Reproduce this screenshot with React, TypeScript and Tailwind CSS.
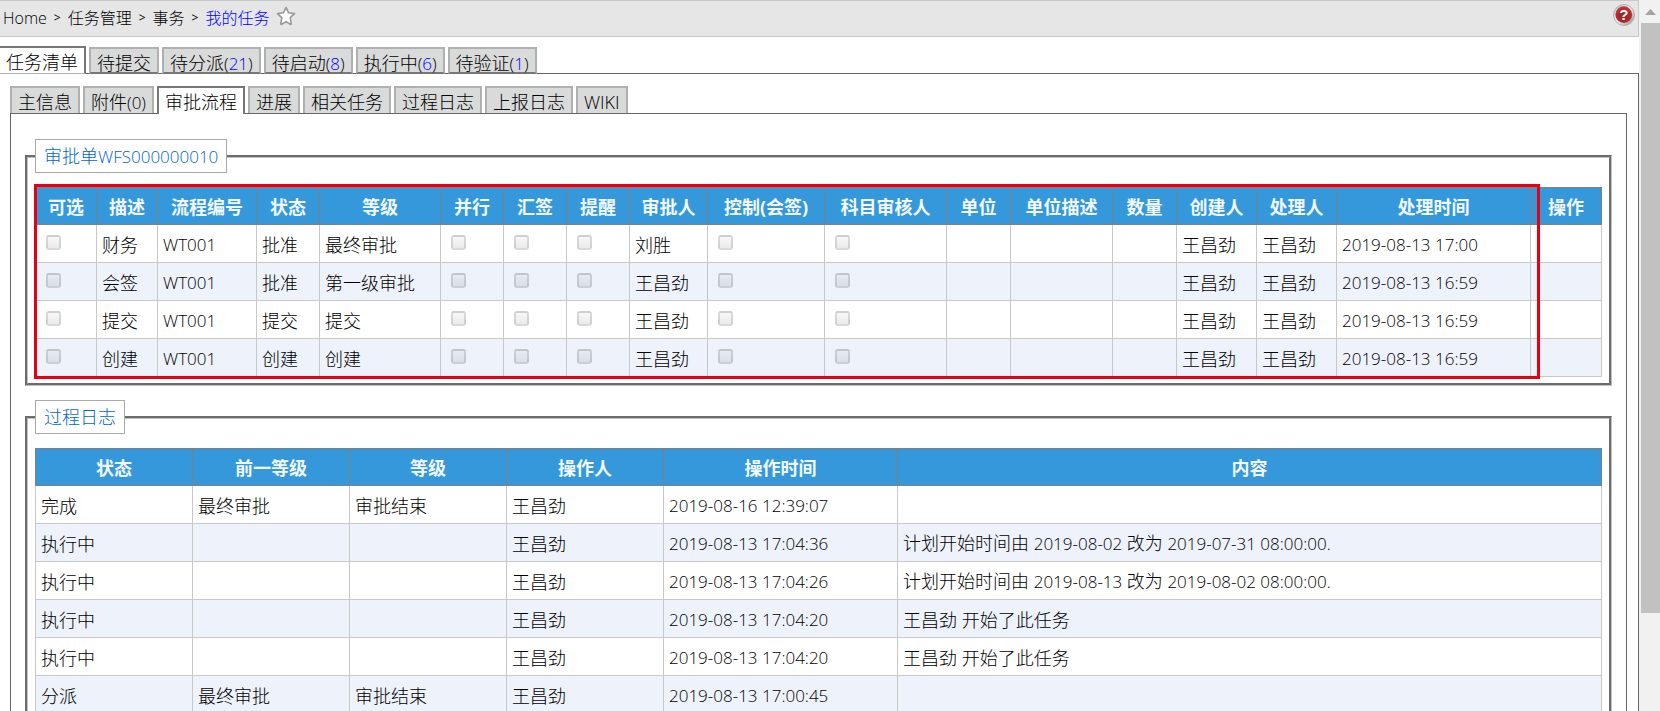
import React, { useState } from 'react';
import clsx from 'clsx';

interface TabItem {
  label: string;
  count?: number;
  highlight?: boolean;
}

interface Column {
  title: string;
  width: string;
}

const TASK_TABS: TabItem[] = [
  { label: '任务清单' },
  { label: '待提交' },
  { label: '待分派', count: 21, highlight: true },
  { label: '待启动', count: 8, highlight: true },
  { label: '执行中', count: 6, highlight: true },
  { label: '待验证', count: 1, highlight: true },
];

const DETAIL_TABS: TabItem[] = [
  { label: '主信息' },
  { label: '附件', count: 0 },
  { label: '审批流程' },
  { label: '进展' },
  { label: '相关任务' },
  { label: '过程日志' },
  { label: '上报日志' },
  { label: 'WIKI' },
];

const FLOW_COLUMNS: Column[] = [
  { title: '可选', width: 'w-[61px]' },
  { title: '描述', width: 'w-[61px]' },
  { title: '流程编号', width: 'w-[99px]' },
  { title: '状态', width: 'w-[63px]' },
  { title: '等级', width: 'w-[121px]' },
  { title: '并行', width: 'w-[63px]' },
  { title: '汇签', width: 'w-[63px]' },
  { title: '提醒', width: 'w-[63px]' },
  { title: '审批人', width: 'w-[78px]' },
  { title: '控制(会签)', width: 'w-[117px]' },
  { title: '科目审核人', width: 'w-[122px]' },
  { title: '单位', width: 'w-[64px]' },
  { title: '单位描述', width: 'w-[102px]' },
  { title: '数量', width: 'w-[64px]' },
  { title: '创建人', width: 'w-[80px]' },
  { title: '处理人', width: 'w-[80px]' },
  { title: '处理时间', width: 'w-[194px]' },
  { title: '操作', width: 'w-[71px]' },
];

const FLOW_ROWS = [
  { desc: '财务', code: 'WT001', status: '批准', level: '最终审批', approver: '刘胜', time: '2019-08-13 17:00' },
  { desc: '会签', code: 'WT001', status: '批准', level: '第一级审批', approver: '王昌劲', time: '2019-08-13 16:59' },
  { desc: '提交', code: 'WT001', status: '提交', level: '提交', approver: '王昌劲', time: '2019-08-13 16:59' },
  { desc: '创建', code: 'WT001', status: '创建', level: '创建', approver: '王昌劲', time: '2019-08-13 16:59' },
];

const LOG_COLUMNS: Column[] = [
  { title: '状态', width: 'w-[157px]' },
  { title: '前一等级', width: 'w-[157px]' },
  { title: '等级', width: 'w-[157px]' },
  { title: '操作人', width: 'w-[157px]' },
  { title: '操作时间', width: 'w-[234px]' },
  { title: '内容', width: 'w-[704px]' },
];

const LOG_ROWS = [
  ['完成', '最终审批', '审批结束', '王昌劲', '2019-08-16 12:39:07', ''],
  ['执行中', '', '', '王昌劲', '2019-08-13 17:04:36', '计划开始时间由 2019-08-02 改为 2019-07-31 08:00:00.'],
  ['执行中', '', '', '王昌劲', '2019-08-13 17:04:26', '计划开始时间由 2019-08-13 改为 2019-08-02 08:00:00.'],
  ['执行中', '', '', '王昌劲', '2019-08-13 17:04:20', '王昌劲 开始了此任务'],
  ['执行中', '', '', '王昌劲', '2019-08-13 17:04:20', '王昌劲 开始了此任务'],
  ['分派', '最终审批', '审批结束', '王昌劲', '2019-08-13 17:00:45', ''],
];

// latin runs sit one size below the chinese text
const Mixed = ({ text }: { text: string }) => (
  <>
    {text.split(/([\x21-\x7e][\x20-\x7e]*)/).map((part, i) =>
      i % 2 ? <span key={i} className="text-[17px]">{part}</span> : part
    )}
  </>
);

const StarIcon = () => (
  <svg width="20" height="20" viewBox="0 0 20 20">
    <path
      d="M10 1.4l2.6 5.4 5.9.8-4.3 4.1 1 5.9c.1.6-.3.9-.8.6L10 15.6l-4.4 2.6c-.5.3-.9 0-.8-.6l1-5.9L1.5 7.6l5.9-.8z"
      fill="#fff"
      stroke="#9a9a9a"
      strokeWidth="1.6"
      strokeLinejoin="round"
    />
  </svg>
);

const HelpIcon = () => (
  <svg width="22" height="22" viewBox="0 0 22 22">
    <defs>
      <linearGradient id="ring" x1="0" y1="0" x2="1" y2="1">
        <stop offset="0" stopColor="#b9bcbe" />
        <stop offset="0.5" stopColor="#f0f0f0" />
        <stop offset="1" stopColor="#858a8c" />
      </linearGradient>
      <radialGradient id="ball" cx="0.5" cy="0.6" r="0.6">
        <stop offset="0" stopColor="#9c2425" />
        <stop offset="0.6" stopColor="#a92a2a" />
        <stop offset="1" stopColor="#d23a3a" />
      </radialGradient>
    </defs>
    <circle cx="11" cy="11" r="10.5" fill="url(#ring)" stroke="#a4a8aa" strokeWidth="0.8" />
    <circle cx="10.8" cy="10.6" r="8.4" fill="url(#ball)" />
    <text x="10.8" y="16" textAnchor="middle" fontFamily="Liberation Sans, sans-serif" fontSize="15" fontWeight="700" fill="#fff">?</text>
  </svg>
);

interface TabBarProps {
  items: TabItem[];
  initial: number;
  nested?: boolean;
}

const TabBar = ({ items, initial, nested }: TabBarProps) => {
  const [active, setActive] = useState(initial);

  return (
    <div role="tablist" className={clsx('relative flex items-end gap-[3px]', !nested && '-mb-px')}>
      {items.map((tab, i) => (
        <button
          key={tab.label}
          role="tab"
          aria-selected={i === active}
          onClick={() => setActive(i)}
          className={clsx(
            'whitespace-nowrap border-x-2 border-t-2 px-1.5 pt-0.5 text-lg leading-6 font-light',
            i === active ? 'h-7 border-[#777] bg-white' : 'h-[27px] border-[#b0b0b0] bg-[#d9dada]',
            !nested && i === 0 && 'border-l-0',
            nested && i === active && '-mb-px',
            !nested && (i === active ? 'border-b border-b-[#b0b0b0]' : 'border-b-2 border-b-[#777]'),
          )}
        >
          {tab.label}
          {tab.count !== undefined && (
            <span className="text-[17px]">
              (<span className={clsx(tab.highlight && 'text-[#0000ff]')}>{tab.count}</span>)
            </span>
          )}
        </button>
      ))}
    </div>
  );
};

const TableHead = ({ columns }: { columns: Column[] }) => (
  <thead>
    <tr className="h-[37px] bg-[#3498db]">
      {columns.map((col) => (
        <th key={col.title} className={clsx('border border-[#808080] px-0 pt-0.5 pb-0 text-lg leading-6 font-bold text-[#f2f8fd]', col.width)}>
          {col.title}
        </th>
      ))}
    </tr>
  </thead>
);

const Cell = ({ children }: { children?: React.ReactNode }) => (
  <td className="whitespace-nowrap border border-[#c8c8c8] px-[5px] pt-0.5 pb-0">
    {typeof children === 'string' ? <Mixed text={children} /> : children}
  </td>
);

const CheckCell = ({ label }: { label: string }) => (
  <Cell>
    <input
      type="checkbox"
      disabled
      aria-label={label}
      className="mb-1 ml-[5px] block size-[15px] appearance-none rounded-[3px] border-2 border-black/12 bg-linear-to-b from-black/3 to-black/8"
    />
  </Cell>
);

const Legend = ({ text }: { text: string }) => (
  <legend className="h-[34px] border border-[#a9a9a9] bg-white px-2 pt-1 text-lg leading-6 font-light text-[#0066cc]">
    <Mixed text={text} />
  </legend>
);

const FIELDSET = 'mx-[14px] border-[3px] border-[#c0c0c0] px-[7px] pt-[14px] pb-[6px] [border-style:groove]';

const App = () => {
  return (
    <div className="flex h-screen overflow-hidden bg-white font-['Open_Sans','Noto_Sans_CJK_SC',sans-serif] text-black">
      <main className="min-w-0 flex-1">
        <header className="flex h-[37px] items-start justify-between border border-l-0 border-[#c8c8c8] bg-[#e6e6e6] px-[3px]">
          <nav className="flex items-center gap-[7px] pt-[5px] text-base leading-6 font-light">
            <a href="#home">Home</a>
            <span className="text-xs font-normal">&gt;</span>
            <a href="#task">任务管理</a>
            <span className="text-xs font-normal">&gt;</span>
            <a href="#affair">事务</a>
            <span className="text-xs font-normal">&gt;</span>
            <a href="#mine" className="text-[#0000ff]">我的任务</a>
            <button aria-label="收藏" className="-mt-1"><StarIcon /></button>
          </nav>
          <button aria-label="帮助" className="pt-[3px]"><HelpIcon /></button>
        </header>

        <div className="pt-[9px]">
          <TabBar items={TASK_TABS} initial={0} />
          <section className="border-t border-r border-[#666] pt-3 pr-[11px] pl-[10px]">
            <TabBar items={DETAIL_TABS} initial={2} nested />
            <section className="border border-[#666] pt-[25px] pb-6">
              <fieldset className={FIELDSET}>
                <Legend text="审批单WFS000000010" />
                <div className="relative">
                  <table className="w-full table-fixed border-collapse text-lg leading-6 font-light">
                    <TableHead columns={FLOW_COLUMNS} />
                    <tbody>
                      {FLOW_ROWS.map((row) => (
                        <tr key={row.desc} className="h-[38px] even:bg-[#eef2fb]">
                          <CheckCell label="可选" />
                          <Cell>{row.desc}</Cell>
                          <Cell>{row.code}</Cell>
                          <Cell>{row.status}</Cell>
                          <Cell>{row.level}</Cell>
                          <CheckCell label="并行" />
                          <CheckCell label="汇签" />
                          <CheckCell label="提醒" />
                          <Cell>{row.approver}</Cell>
                          <CheckCell label="控制(会签)" />
                          <CheckCell label="科目审核人" />
                          <Cell />
                          <Cell />
                          <Cell />
                          <Cell>王昌劲</Cell>
                          <Cell>王昌劲</Cell>
                          <Cell>{row.time}</Cell>
                          <Cell />
                        </tr>
                      ))}
                    </tbody>
                  </table>
                  <div className="pointer-events-none absolute -top-[3px] right-[62px] -bottom-0.5 -left-px border-[3px] border-[#e60012]" />
                </div>
              </fieldset>

              <fieldset className={clsx(FIELDSET, 'mt-[14px]')}>
                <Legend text="过程日志" />
                <table className="w-full table-fixed border-collapse text-lg leading-6 font-light">
                  <TableHead columns={LOG_COLUMNS} />
                  <tbody>
                    {LOG_ROWS.map((row, i) => (
                      <tr key={i} className="h-[38px] even:bg-[#eef2fb]">
                        {row.map((text, j) => (
                          <Cell key={j}>{text}</Cell>
                        ))}
                      </tr>
                    ))}
                  </tbody>
                </table>
              </fieldset>
            </section>
          </section>
        </div>
      </main>

      <aside className="flex w-[21px] shrink-0 flex-col bg-[#f1f1f1] pl-0.5">
        <div className="flex h-[23px] items-center justify-center">
          <svg width="11" height="6" viewBox="0 0 11 6"><path d="M5.5 0L11 6H0z" fill="#a3a3a3" /></svg>
        </div>
        <div className="h-[83%] bg-[#c1c1c1]" />
      </aside>
    </div>
  );
};

export default App;
